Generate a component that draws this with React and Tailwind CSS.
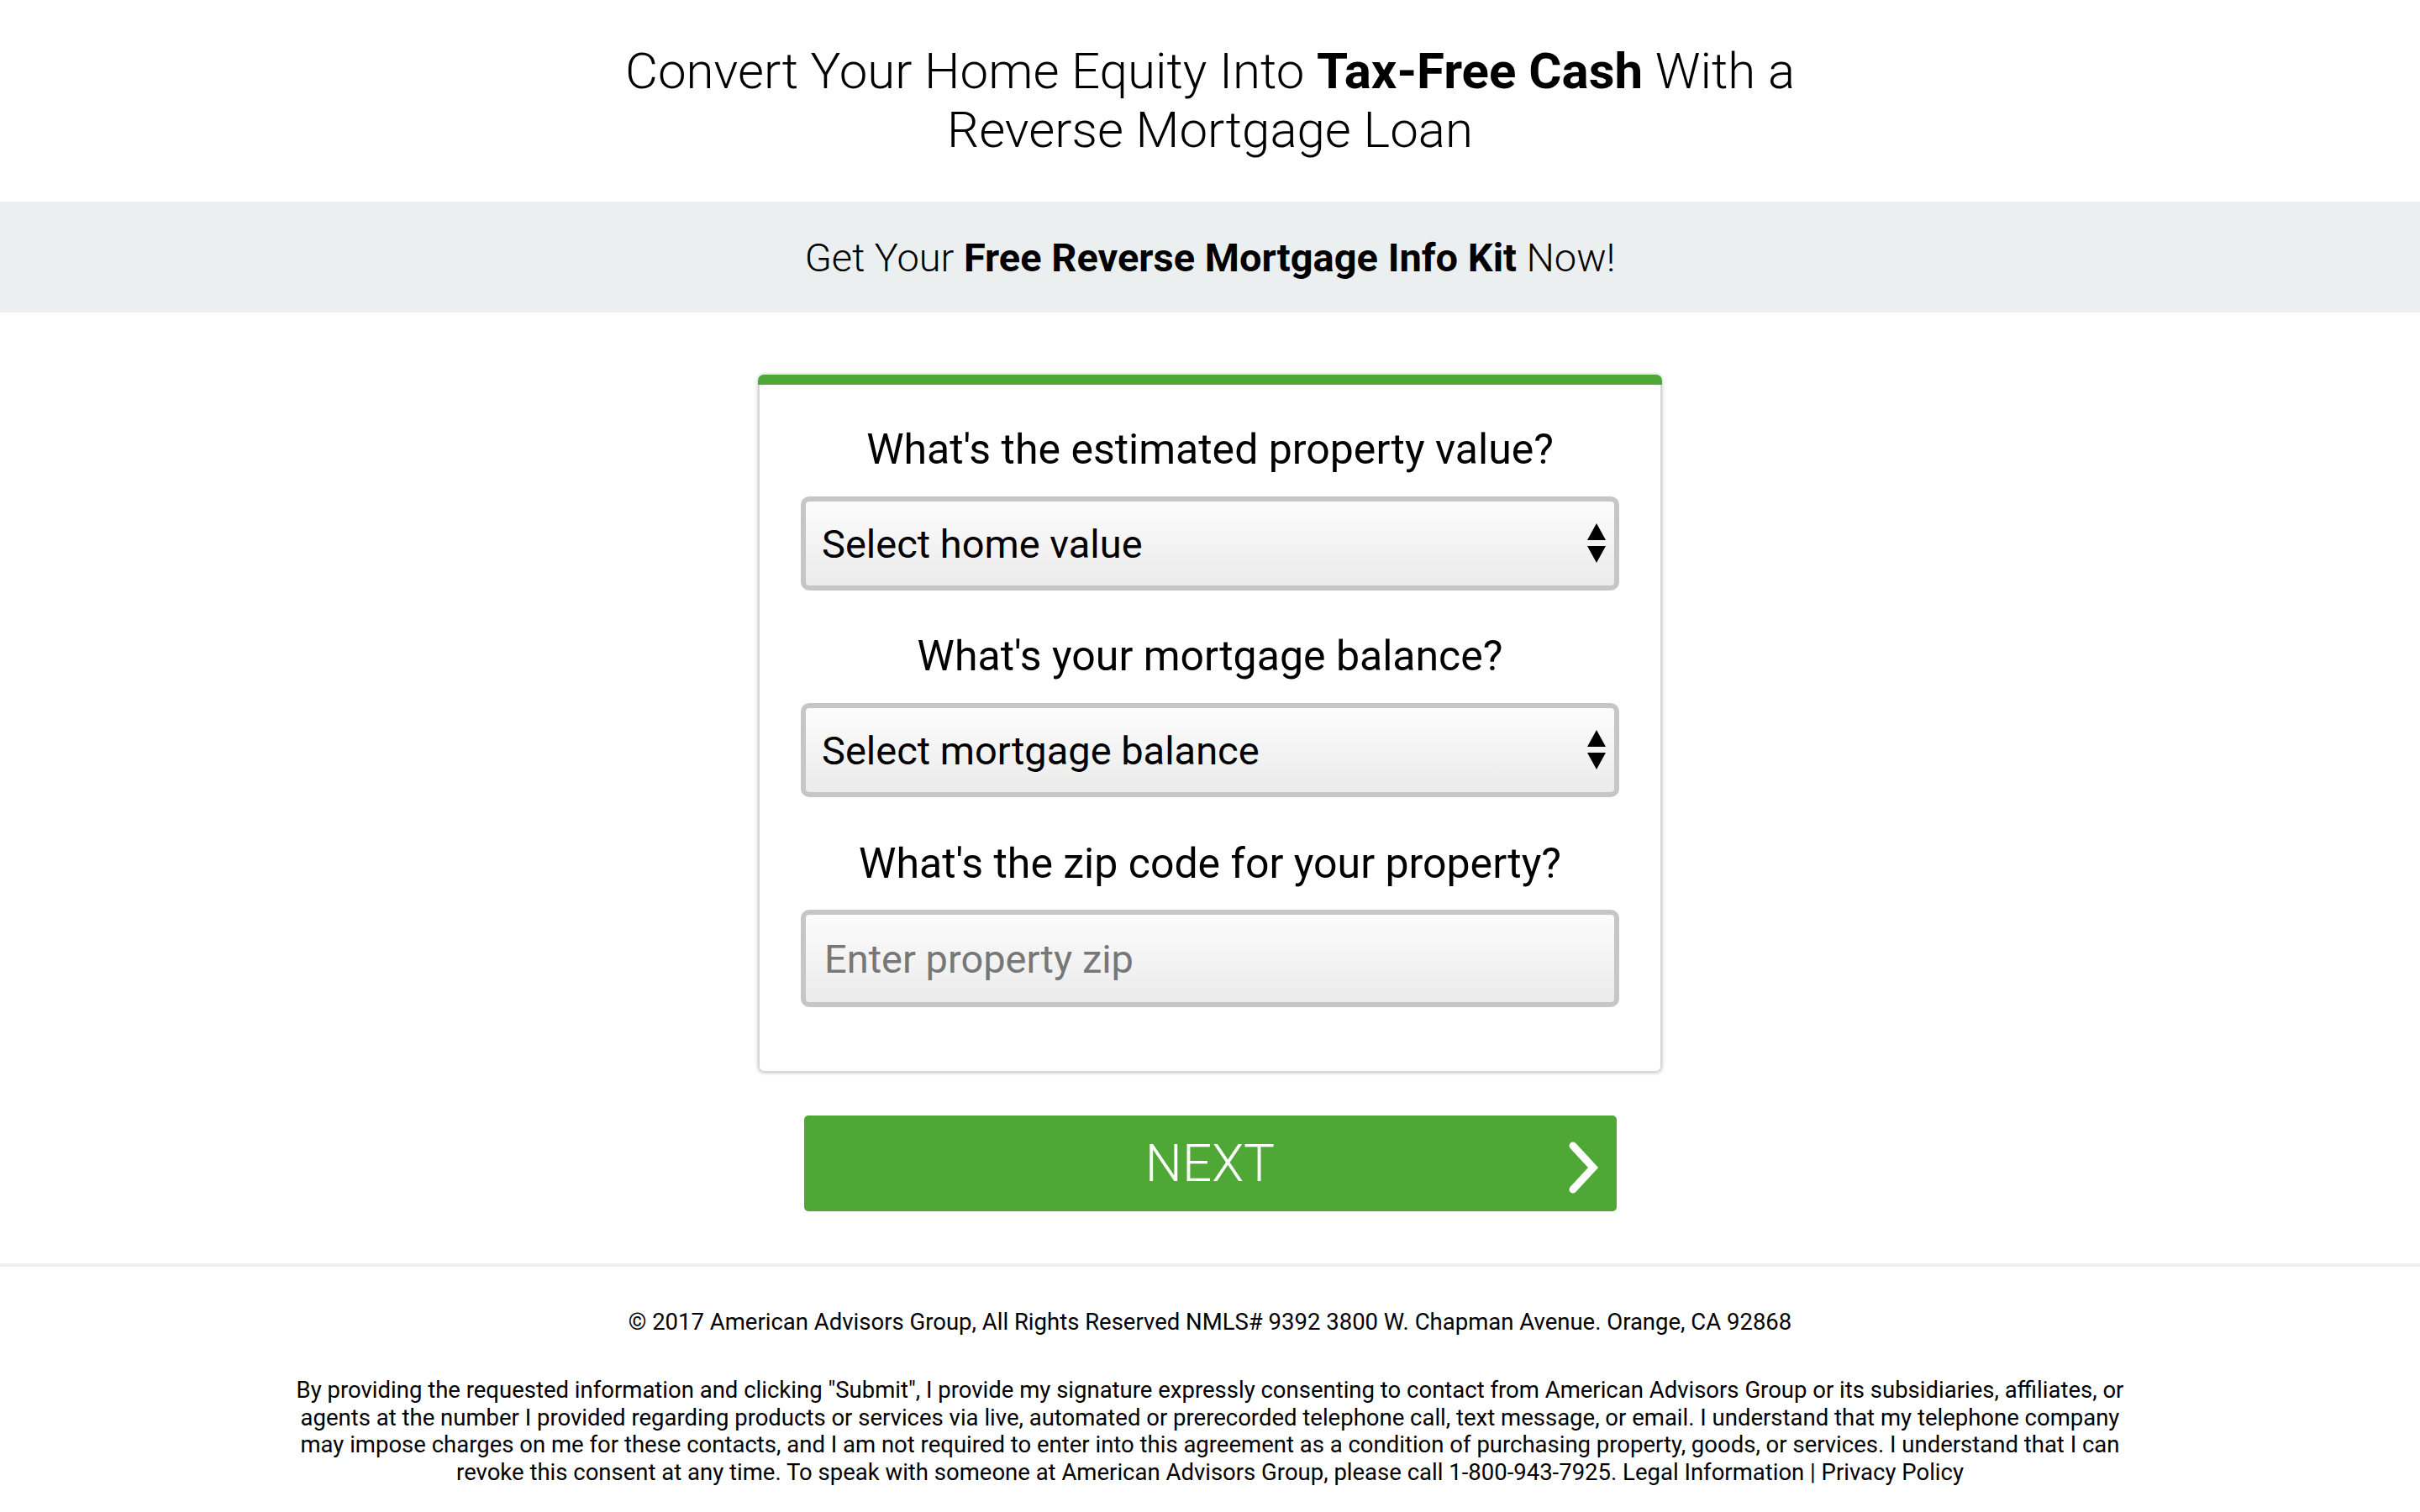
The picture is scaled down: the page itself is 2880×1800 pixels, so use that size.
import React from "react";

function Arrows() {
  return (
    <svg width="24" height="48" viewBox="0 0 24 48" className="shrink-0">
      <polygon points="12,0 23,20 1,20" fill="#000" />
      <polygon points="1,27 23,27 12,47" fill="#000" />
    </svg>
  );
}

function SelectBox({ label }) {
  return (
    <div className="flex h-[112px] w-full items-center justify-between rounded-[10px] border-[6px] border-[#c3c7ca] bg-linear-to-b from-[#fcfcfc] to-[#ebebeb] pl-[19px] pr-[9px]">
      <span className="text-[47px] leading-none text-black">{label}</span>
      <Arrows />
    </div>
  );
}

export default function App() {
  return (
    <div
      className="min-h-screen w-full bg-white text-black"
      style={{ fontFamily: "Roboto, 'Noto Sans', sans-serif" }}
    >
      {/* Title */}
      <header className="flex justify-center pt-[50px] pb-[50px]">
        <h1 className="text-center text-[60px] leading-[70px] font-light">
          Convert Your Home Equity Into <span className="font-bold">Tax-Free Cash</span> With a
          <br />
          Reverse Mortgage Loan
        </h1>
      </header>

      {/* Sub band */}
      <div className="flex h-[132px] items-center justify-center bg-[#eceff0]">
        <p className="text-[47px] leading-none font-light">
          Get Your <span className="font-bold">Free Reverse Mortgage Info Kit</span> Now!
        </p>
      </div>

      {/* Form card */}
      <div className="flex flex-col items-center pt-[74px]">
        <div className="w-[1076px] overflow-hidden rounded-[7px] shadow-[0_0_4px_rgba(0,0,0,0.25)]">
          <div className="h-[12px] bg-[#4fa836]" />
          <div className="flex flex-col items-center rounded-b-[7px] border-x-2 border-b-2 border-[#d6d6d6] px-[49px] pt-[49px] pb-[76px]">
            <h2 className="text-[50px] leading-[56px]">What's the estimated property value?</h2>
            <div className="mt-[28px] w-full">
              <SelectBox label="Select home value" />
            </div>
            <h2 className="mt-[50px] text-[50px] leading-[56px]">What's your mortgage balance?</h2>
            <div className="mt-[28px] w-full">
              <SelectBox label="Select mortgage balance" />
            </div>
            <h2 className="mt-[51px] text-[50px] leading-[56px]">What's the zip code for your property?</h2>
            <input
              type="text"
              placeholder="Enter property zip"
              className="mt-[27px] h-[116px] w-full appearance-none rounded-[10px] border-[6px] border-[#c3c7ca] bg-linear-to-b from-[#fcfcfc] to-[#ebebeb] pl-[22px] text-[47px] text-black outline-none placeholder:text-[#777777]"
            />
          </div>
        </div>

        {/* Next button */}
        <button className="relative mt-[51px] flex h-[114px] w-[967px] items-center justify-center rounded-[5px] bg-[#4fa836] text-white">
          <span className="text-[62px] leading-none font-light">NEXT</span>
          <svg
            width="40"
            height="62"
            viewBox="0 0 40 62"
            className="absolute right-[20px] top-[31px]"
          >
            <polyline
              points="8,5 32,31 8,57"
              fill="none"
              stroke="#fff"
              strokeWidth="9"
              strokeLinejoin="miter"
              strokeLinecap="round"
            />
          </svg>
        </button>
      </div>

      {/* Footer */}
      <footer className="mt-[62px]">
        <div className="h-[4px] w-full bg-[#eceff0]" />
        <p className="mt-[50px] text-center text-[27.5px] leading-[32px]">
          © 2017 American Advisors Group, All Rights Reserved NMLS# 9392 3800 W. Chapman Avenue. Orange, CA 92868
        </p>
        <div className="flex justify-center">
          <p className="mt-[49px] w-[2210px] text-center text-[27.5px] leading-[32.5px]">
            By providing the requested information and clicking "Submit", I provide my signature expressly consenting to contact from American Advisors Group or its subsidiaries, affiliates, or agents at the number I provided regarding products or services via live, automated or prerecorded telephone call, text message, or email. I understand that my telephone company may impose charges on me for these contacts, and I am not required to enter into this agreement as a condition of purchasing property, goods, or services. I understand that I can revoke this consent at any time. To speak with someone at American Advisors Group, please call 1-800-943-7925. Legal Information | Privacy Policy
          </p>
        </div>
      </footer>
    </div>
  );
}
